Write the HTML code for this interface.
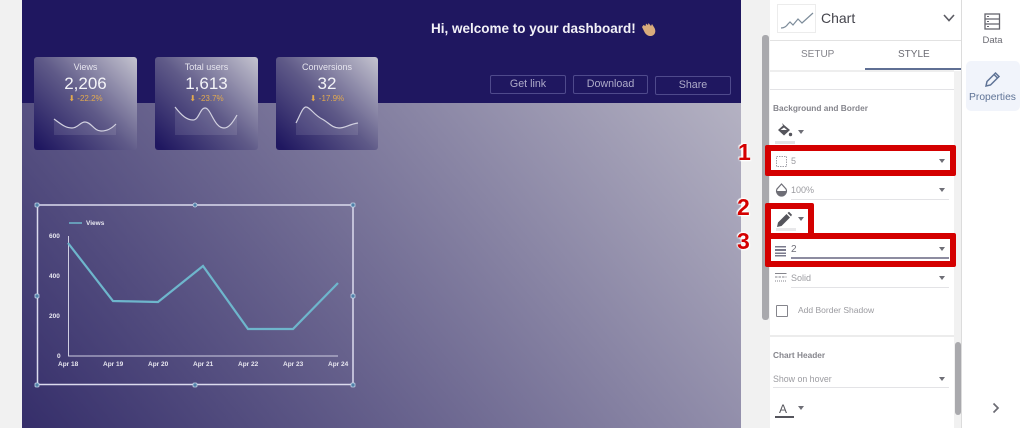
<!DOCTYPE html>
<html><head><meta charset="utf-8">
<style>
*{box-sizing:border-box}
html,body{margin:0;padding:0;width:1024px;height:428px;overflow:hidden;background:#f1f1f1;font-family:"Liberation Sans",sans-serif}
#w{position:absolute;left:0;top:0;width:1024px;height:428px;filter:blur(.35px)}
.a{position:absolute}
.t{position:absolute;white-space:nowrap;line-height:1}
.canvas{left:22px;top:0;width:719px;height:428px;background:linear-gradient(51deg,#352e6a 0%,#bfbdca 100%)}
.hdr{left:22px;top:0;width:719px;height:103px;background:#1f1760}
.card{position:absolute;top:57px;width:103px;height:93px;border-radius:3px;background:linear-gradient(45deg,#1f1760 4%,#5f5a88 50%,#c4c3cf 100%)}
.btn{position:absolute;height:19px;border:1.500px solid #4f4a8c;border-radius:2px;color:#aeabc9;font-size:10.700px;text-align:center;line-height:17px}
.red{position:absolute;border:6px solid #d40000;border-radius:2px;background:transparent}
.num{position:absolute;font-family:"Liberation Sans",sans-serif;font-weight:bold;font-size:23px;color:#d40000;line-height:1;text-shadow:0 0 2px #fff,0 0 2px #fff,1px 1px 1px #fff,-1px -1px 1px #fff}
.g{color:#9b9ba0}
.line{position:absolute;height:1px;background:#e3e3e6}
.car{position:absolute;width:0;height:0;border-left:3.500px solid transparent;border-right:3.500px solid transparent;border-top:4px solid #6e6e76}
.l{position:absolute;white-space:nowrap;line-height:1;font-size:6.500px;font-weight:bold;color:#e8e7f0}
.lb{position:absolute;white-space:nowrap;line-height:1;top:63px;text-align:center;font-size:9px;color:#e6e5ee}
.v{position:absolute;white-space:nowrap;line-height:1;top:75px;text-align:center;font-size:17px;color:#f4f4f8}
.d{position:absolute;white-space:nowrap;line-height:1;top:95px;text-align:center;font-size:8px;color:#e2a94e}
</style></head><body>
<div id="w">
<div class="a canvas"></div>
<div class="a hdr"></div>

<div class="t" style="left:431px;top:22px;font-size:13.500px;font-weight:bold;color:#f2f1f7">Hi, welcome to your dashboard!</div>
<svg class="a" style="left:640px;top:22px" width="16" height="15" viewBox="0 0 16 15"><path d="M2 5l3 6c2 3 6 4 8.500 2s2-5 1-7L12 2l-1 2L8.500 1 8 3 6 1.500 5.500 4 3.500 3z" fill="#d9ab7c"/></svg>

<div class="btn" style="left:490px;top:75px;width:76px">Get link</div>
<div class="btn" style="left:573px;top:75px;width:75px">Download</div>
<div class="btn" style="left:655px;top:76px;width:76px">Share</div>

<div class="card" style="left:34px"></div>
<div class="card" style="left:155px"></div>
<div class="card" style="left:276px;width:102px"></div>

<div class="lb" style="left:34px;width:103px">Views</div>
<div class="v" style="left:34px;width:103px">2,206</div>
<div class="d" style="left:34px;width:103px">⬇ -22.2%</div>
<div class="lb" style="left:155px;width:103px">Total users</div>
<div class="v" style="left:155px;width:103px">1,613</div>
<div class="d" style="left:155px;width:103px">⬇ -23.7%</div>
<div class="lb" style="left:276px;width:102px">Conversions</div>
<div class="v" style="left:276px;width:102px">32</div>
<div class="d" style="left:276px;width:102px">⬇ -17.9%</div>

<svg class="a" style="left:0;top:0" width="741" height="428" viewBox="0 0 741 428" fill="none">
<path d="M54 119C62 125 66 128 72 128C78 128 80 122 85 122C91 122 94 131 101 131C107 131 111 129 116 124V135H54Z" fill="#fff" fill-opacity=".1"/>
<path d="M54 119C62 125 66 128 72 128C78 128 80 122 85 122C91 122 94 131 101 131C107 131 111 129 116 124" stroke="#d2d1e0" stroke-width="1.200"/>
<path d="M175 107C182 116 187 120 193 120C199 120 200 108 205 108C211 108 214 128 224 128C229 128 233 122 237 115V135H175Z" fill="#fff" fill-opacity=".1"/>
<path d="M175 107C182 116 187 120 193 120C199 120 200 108 205 108C211 108 214 128 224 128C229 128 233 122 237 115" stroke="#d2d1e0" stroke-width="1.200"/>
<path d="M296 123C301 113 303 107 306 107C310 107 314 115 322 119C328 122 332 128 339 128C345 128 350 124 358 123V135H296Z" fill="#fff" fill-opacity=".1"/>
<path d="M296 123C301 113 303 107 306 107C310 107 314 115 322 119C328 122 332 128 339 128C345 128 350 124 358 123" stroke="#d2d1e0" stroke-width="1.200"/>

<rect x="37.500" y="205" width="315.500" height="179.500" stroke="#dcdbee" stroke-width="1.500"/>
<path d="M68.500 236V356H338" stroke="#cfcee2" stroke-width="1"/>
<path d="M68 243L113 301L158 302L203 266L248 329L293 329L338 283" stroke="#6eb6cc" stroke-width="2.200"/>
<path d="M69 223H82" stroke="#6eb6cc" stroke-width="1.500"/>
<g fill="#4f80a8" stroke="#c4d3e6" stroke-width=".8">
<rect x="35" y="203" width="4" height="4" rx="1"/><rect x="193" y="203" width="4" height="4" rx="2"/><rect x="351" y="203" width="4" height="4" rx="1"/>
<rect x="35" y="294" width="4" height="4" rx="1"/><rect x="351" y="294" width="4" height="4" rx="1"/>
<rect x="35" y="383" width="4" height="4" rx="1"/><rect x="193" y="383" width="4" height="4" rx="1"/><rect x="351" y="383" width="4" height="4" rx="1"/>
</g>
</svg>
<div class="l" style="left:86px;top:221px">Views</div>
<div class="l" style="left:49px;top:234px">600</div>
<div class="l" style="left:49px;top:274px">400</div>
<div class="l" style="left:49px;top:314px">200</div>
<div class="l" style="left:57px;top:354px">0</div>
<div class="l" style="left:58px;top:362px">Apr 18</div>
<div class="l" style="left:103px;top:362px">Apr 19</div>
<div class="l" style="left:148px;top:362px">Apr 20</div>
<div class="l" style="left:193px;top:362px">Apr 21</div>
<div class="l" style="left:238px;top:362px">Apr 22</div>
<div class="l" style="left:283px;top:362px">Apr 23</div>
<div class="l" style="left:328px;top:362px">Apr 24</div>

<!-- left scrollbar -->
<div class="a" style="left:762px;top:35px;width:7px;height:285px;background:#a9a9ad;border-radius:3px"></div>

<!-- panel -->
<div class="a" style="left:770px;top:0;width:191px;height:428px;background:#fff"></div>
<div class="a" style="left:961px;top:0;width:63px;height:428px;background:#fff;border-left:1px solid #dcdcdc"></div>
<div class="a" style="left:954px;top:71px;width:7px;height:357px;background:#f1f1f1"></div>
<div class="a" style="left:770px;top:40px;width:191px;height:1px;background:#e2e2e2"></div>
<div class="a" style="left:770px;top:70px;width:184px;height:2px;background:#eee"></div>
<div class="line" style="left:770px;top:89px;width:184px"></div>
<div class="a" style="left:770px;top:335px;width:184px;height:2px;background:#ececec"></div>
<div class="a" style="left:955px;top:342px;width:6px;height:73px;background:#a9a9ad;border-radius:3px"></div>

<div class="a" style="left:777px;top:4px;width:39px;height:29px;border:1px solid #ececec"></div>
<svg class="a" style="left:780px;top:10px" width="34" height="20" viewBox="0 0 34 20" fill="none"><path d="M1 18C4 18 6 17 8 14L10 12L13 15L18 9L22 13L33 3" stroke="#7d8c9a" stroke-width="1.200"/></svg>
<div class="t" style="left:821px;top:11px;font-size:14px;color:#45454d">Chart</div>
<svg class="a" style="left:942px;top:13px" width="14" height="10" viewBox="0 0 14 10" fill="none"><path d="M2 2L7 7.500L12 2" stroke="#5c5c64" stroke-width="1.600"/></svg>

<div class="t" style="left:801px;top:50px;font-size:10px;color:#85858c">SETUP</div>
<div class="t" style="left:898px;top:50px;font-size:10px;color:#6b6b73">STYLE</div>
<div class="a" style="left:865px;top:68px;width:96px;height:2px;background:#5f6f94"></div>

<div class="t" style="left:773px;top:104px;font-size:8.300px;font-weight:bold;color:#85858c">Background and Border</div>

<svg class="a" style="left:776px;top:122px" width="18" height="16" viewBox="0 0 18 16"><path d="M6 1L8 3L14 8L8 13.500L2 8L7 3.500Z" fill="#55555c"/><path d="M4.500 8H11L8 5.500Z" fill="#fff"/><circle cx="14.500" cy="12.500" r="1.700" fill="#55555c"/></svg>
<div class="car" style="left:798px;top:130px"></div>
<div class="a" style="left:775px;top:141px;width:20px;height:3px;background:#e2e2e4"></div>

<svg class="a" style="left:775px;top:155px" width="14" height="13" viewBox="0 0 14 13" fill="none"><rect x="1.500" y="1.500" width="10" height="10" stroke="#a0a0a8" stroke-dasharray="1.500 1"/></svg>
<div class="t g" style="left:791px;top:157px;font-size:9px">5</div>
<div class="car" style="left:939px;top:159px"></div>

<svg class="a" style="left:775px;top:183px" width="13" height="14" viewBox="0 0 13 14"><path d="M6.500 1L11 6C12.500 9 10 13 6.500 13S.5 9 2 6Z" fill="none" stroke="#6e6e76" stroke-width="1.200"/><path d="M1.500 8H11.500C11.500 11 9 13 6.500 13S1.500 11 1.500 8Z" fill="#6e6e76"/></svg>
<div class="t g" style="left:791px;top:186px;font-size:9px">100%</div>
<div class="car" style="left:939px;top:188px"></div>
<div class="line" style="left:791px;top:199px;width:158px"></div>

<svg class="a" style="left:776px;top:211px" width="17" height="17" viewBox="0 0 17 17"><path d="M1 16L2 11.500L10.500 3L14 6.500L5.500 15Z" fill="#55555c"/><path d="M11.500 2L13 .8L16 3.800L15 5.500Z" fill="#55555c"/></svg>
<div class="car" style="left:798px;top:217px"></div>
<div class="a" style="left:776px;top:228px;width:20px;height:3px;background:#e8e8ea"></div>

<svg class="a" style="left:775px;top:246px" width="12" height="11" viewBox="0 0 12 11" fill="#7a7a8c"><rect y="0" width="11" height="1.500"/><rect y="3" width="11" height="2"/><rect y="6.500" width="11" height="1.500"/><rect y="9" width="11" height="1.500"/></svg>
<div class="t" style="left:791px;top:245px;font-size:10px;color:#6e6e78">2</div>
<div class="car" style="left:939px;top:247px"></div>
<div class="a" style="left:791px;top:257px;width:158px;height:2px;background:#8d8ca0"></div>

<svg class="a" style="left:775px;top:272px" width="12" height="11" viewBox="0 0 12 11" fill="none" stroke="#85858c"><path d="M0 1.500H11.500"/><path d="M0 5H11.500" stroke-dasharray="2.500 1"/><path d="M0 9H11.500" stroke-dasharray="1 1"/></svg>
<div class="t g" style="left:791px;top:274px;font-size:9px">Solid</div>
<div class="car" style="left:939px;top:276px"></div>
<div class="line" style="left:791px;top:287px;width:158px"></div>

<div class="a" style="left:776px;top:305px;width:12px;height:12px;border:1.500px solid #85858c;border-radius:1px"></div>
<div class="t g" style="left:798px;top:306px;font-size:8.500px">Add Border Shadow</div>

<div class="t" style="left:773px;top:351px;font-size:8.300px;font-weight:bold;color:#85858c">Chart Header</div>
<div class="t g" style="left:773px;top:375px;font-size:8.800px">Show on hover</div>
<div class="car" style="left:939px;top:377px"></div>
<div class="line" style="left:773px;top:387px;width:176px"></div>

<div class="t" style="left:779px;top:403px;font-size:12px;color:#55555c">A</div>
<div class="a" style="left:775px;top:416px;width:19px;height:2px;background:#55555c"></div>
<div class="car" style="left:798px;top:406px"></div>

<!-- right rail -->
<svg class="a" style="left:984px;top:13px" width="17" height="17" viewBox="0 0 17 17" fill="none" stroke="#65656d" stroke-width="1.300"><rect x="1" y="1" width="14.500" height="15"/><path d="M1 6H15.500M1 11H15.500"/><path d="M3 3.500H5M3 8.500H5M3 13.500H5" stroke-width="1"/></svg>
<div class="t" style="left:961px;width:63px;text-align:center;top:36px;font-size:9.500px;color:#6b6b73">Data</div>
<div class="a" style="left:966px;top:61px;width:54px;height:50px;background:#f1f4fb;border-radius:5px"></div>
<svg class="a" style="left:984px;top:71px" width="17" height="17" viewBox="0 0 17 17" fill="none" stroke="#5f7396" stroke-width="1.500"><path d="M2 15L3 10.500L11.500 2L15 5.500L6.500 14Z"/><path d="M10 3.500L13.500 7"/></svg>
<div class="t" style="left:961px;width:63px;text-align:center;top:93px;font-size:10.300px;color:#5f7396">Properties</div>
<svg class="a" style="left:991px;top:401px" width="10" height="14" viewBox="0 0 10 14" fill="none"><path d="M2.500 2.500L7 7L2.500 11.500" stroke="#6b6b73" stroke-width="1.700"/></svg>

<!-- red annotations -->
<div class="red" style="left:765px;top:145px;width:191px;height:31px"></div>
<div class="red" style="left:765px;top:203px;width:49px;height:36px"></div>
<div class="red" style="left:765px;top:233px;width:191px;height:34px"></div>
<div class="num" style="left:738px;top:141px">1</div>
<div class="num" style="left:737px;top:196px">2</div>
<div class="num" style="left:737px;top:230px">3</div>
</div>
</body></html>
